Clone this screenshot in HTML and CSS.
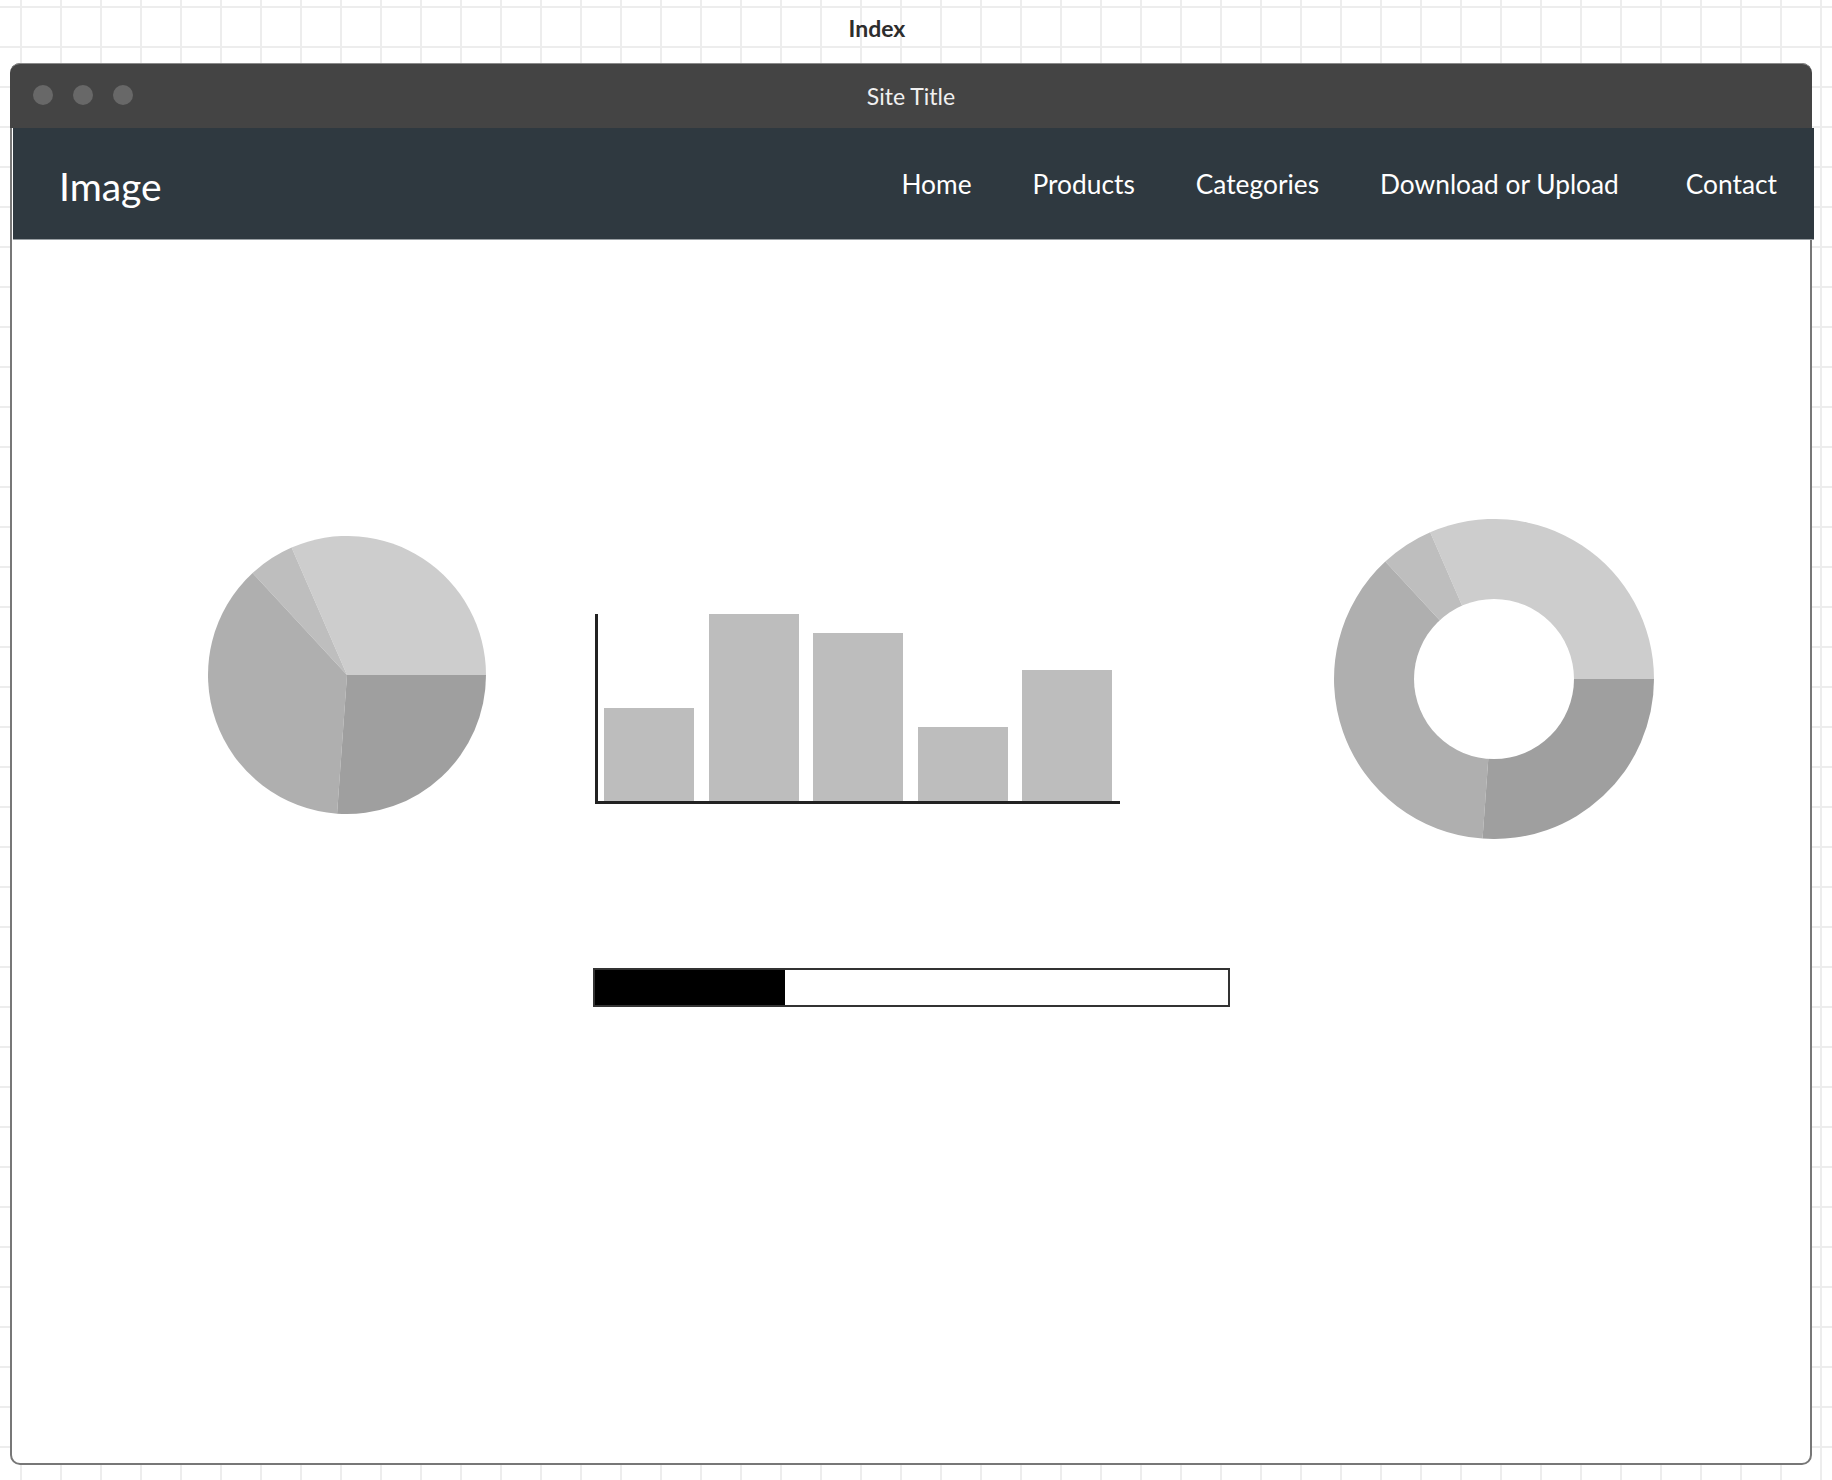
FILE: index.html
```html
<!DOCTYPE html>
<html lang="en">
<head>
<meta charset="utf-8">
<title>Index</title>
<link rel="stylesheet" href="styles.css">
</head>
<body>
<div class="page-title">Index</div>
<div class="window">
  <div class="titlebar">
    <div class="dots"><span class="dot"></span><span class="dot"></span><span class="dot"></span></div>
    <div class="site-title">Site Title</div>
    <div></div>
  </div>
  <nav class="navbar">
    <div class="brand">Image</div>
    <ul class="links">
      <li>Home</li>
      <li>Products</li>
      <li>Categories</li>
      <li>Download or Upload</li>
      <li>Contact</li>
    </ul>
  </nav>
  <main class="content">
    <div class="charts">
      <svg class="pie" width="278" height="278" viewBox="0 0 278 278">
        <path d="M139,139 L278,139 A139,139 0 0 0 83.58,11.52 Z" fill="#cdcdcd"/>
        <path d="M139,139 L83.58,11.52 A139,139 0 0 0 44.56,37.01 Z" fill="#bebebe"/>
        <path d="M139,139 L44.56,37.01 A139,139 0 0 0 129.06,277.64 Z" fill="#afafaf"/>
        <path d="M139,139 L129.06,277.64 A139,139 0 0 0 278,139 Z" fill="#9f9f9f"/>
      </svg>
      <div class="bars">
        <div class="bar" style="height:93px"></div>
        <div class="bar" style="height:187px"></div>
        <div class="bar" style="height:168px"></div>
        <div class="bar" style="height:74px"></div>
        <div class="bar" style="height:131px"></div>
      </div>
      <svg class="donut" width="320" height="320" viewBox="0 0 320 320">
        <path d="M160,160 L320,160 A160,160 0 0 0 96.21,13.26 Z" fill="#cdcdcd"/>
        <path d="M160,160 L96.21,13.26 A160,160 0 0 0 51.30,42.61 Z" fill="#bebebe"/>
        <path d="M160,160 L51.30,42.61 A160,160 0 0 0 148.56,319.59 Z" fill="#afafaf"/>
        <path d="M160,160 L148.56,319.59 A160,160 0 0 0 320,160 Z" fill="#9f9f9f"/>
        <circle cx="160" cy="160" r="80" fill="#ffffff"/>
      </svg>
    </div>
    <div class="progress"><div class="progress-fill" style="width:190px"></div></div>
  </main>
</div>
</body>
</html>
```
FILE: styles.css
```css
html, body {
  margin: 0;
  padding: 0;
}
body {
  width: 1832px;
  height: 1480px;
  overflow: hidden;
  font-family: Lato, "Open Sans", sans-serif;
  background-color: #ffffff;
  background-image:
    linear-gradient(to right, #ededed 2px, transparent 2px),
    linear-gradient(to bottom, #ededed 2px, transparent 2px);
  background-size: 40px 40px;
  background-position: 20px 6px;
}
.page-title {
  height: 63px;
  box-sizing: border-box;
  padding: 14px 78px 0 0;
  text-align: center;
  font-size: 23px;
  font-weight: 700;
  color: #2d2d2d;
  line-height: 28px;
}
.window {
  margin: 0 20px 0 10px;
  height: 1402px;
  box-sizing: border-box;
  border: 2px solid #777777;
  border-radius: 10px;
  background: #ffffff;
  display: flex;
  flex-direction: column;
}
.titlebar {
  margin: -2px -2px 0 -2px;
  height: 65px;
  box-sizing: border-box;
  border-top: 1px solid #8a8a8a;
  border-radius: 10px 10px 0 0;
  background: #444444;
  display: grid;
  grid-template-columns: 1fr auto 1fr;
  align-items: center;
}
.dots {
  display: flex;
  gap: 20px;
  padding-left: 23px;
  padding-bottom: 3px;
}
.dot {
  width: 20px;
  height: 20px;
  border-radius: 50%;
  background: #686868;
}
.site-title {
  color: #f0f0f0;
  font-size: 23px;
  padding-bottom: 1px;
}
.navbar {
  margin: 0 -4px 0 1px;
  height: 112px;
  box-sizing: border-box;
  border-bottom: 1px solid #9aa0a4;
  background: #2f3940;
  display: flex;
  align-items: center;
  justify-content: space-between;
  padding: 0 37px 0 46px;
  color: #ffffff;
}
.brand {
  font-size: 39px;
  padding-top: 4px;
}
.links {
  list-style: none;
  margin: 0;
  padding: 0;
  display: flex;
  gap: 61px;
  font-size: 26.3px;
}
.links li:last-child {
  margin-left: 6px;
}
.content {
  flex: 1;
  padding-top: 279px;
}
.charts {
  display: flex;
  align-items: flex-start;
  padding-left: 196px;
}
.pie {
  display: block;
  margin-top: 17px;
}
.bars {
  margin-top: 95px;
  margin-left: 109px;
  height: 187px;
  width: 508px;
  padding: 0 8px 0 6px;
  border-left: 3px solid #222222;
  border-bottom: 3px solid #222222;
  display: flex;
  align-items: flex-end;
  gap: 14.5px;
}
.bar {
  width: 90px;
  background: #bdbdbd;
}
.donut {
  display: block;
  margin-left: 214px;
}
.progress {
  margin: 129px auto 0;
  width: 633px;
  height: 35px;
  border: 2px solid #333333;
  background: #ffffff;
  display: flex;
}
.progress-fill {
  background: #000000;
  height: 100%;
}
```
